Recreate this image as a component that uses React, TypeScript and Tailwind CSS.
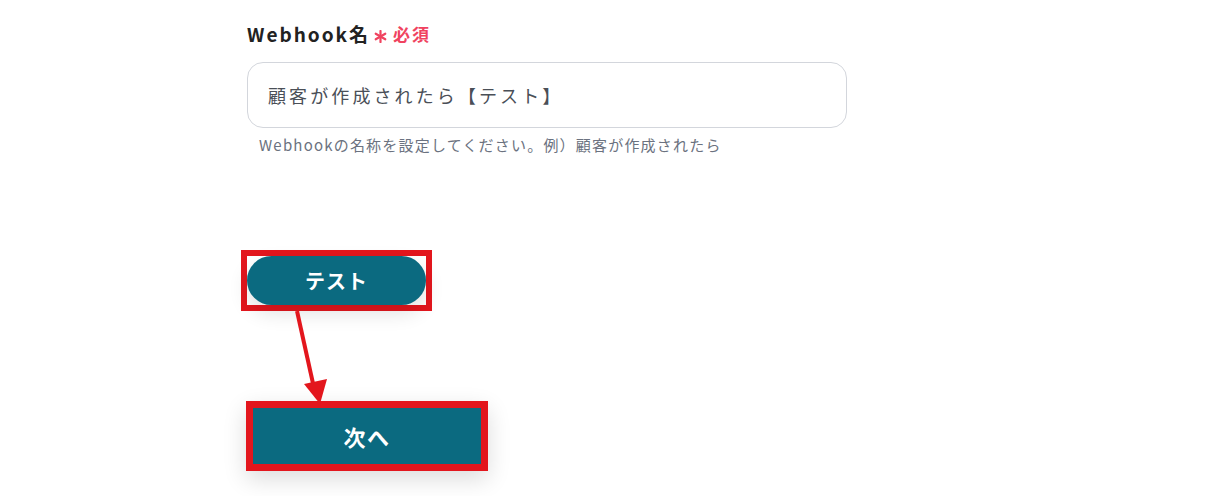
import React from 'react';

function Arrow() {
  return (
    <svg
      className="absolute left-0 top-0 pointer-events-none"
      width={1231}
      height={496}
      viewBox="0 0 1231 496"
    >
      <line x1={297} y1={311} x2={314} y2={388} stroke="#e3161d" strokeWidth={4} />
      <polygon points="304,384 327,379 320,404" fill="#e3161d" />
    </svg>
  );
}

function Asterisk() {
  return (
    <svg width={13} height={13} viewBox="0 0 13 13" className="mt-[5px]">
      <g stroke="#f0435f" strokeWidth={2.2} strokeLinecap="round">
        <line x1={6.5} y1={1} x2={6.5} y2={12} />
        <line x1={1.7} y1={3.7} x2={11.3} y2={9.3} />
        <line x1={1.7} y1={9.3} x2={11.3} y2={3.7} />
      </g>
    </svg>
  );
}

export default function App() {
  return (
    <div className="relative w-[1231px] h-[496px] bg-white overflow-hidden font-['Noto_Sans_CJK_JP','Noto_Sans',sans-serif]">
      <div className="pl-[247px] pt-[20px]">
        {/* label */}
        <div className="flex items-center h-[28px]">
          <span className="text-[19px] font-bold text-[#222] tracking-[2px]">Webhook名</span>
          <span className="ml-[4px]">
            <Asterisk />
          </span>
          <span className="ml-[6px] text-[17px] font-bold text-[#f0435f] tracking-[2px]">必須</span>
        </div>

        {/* input */}
        <div className="mt-[14px] w-[600px] h-[66px] rounded-[16px] border border-[#d3d6dc] flex items-center pl-[20px]">
          <span className="text-[18px] text-[#4a4f57] tracking-[3.1px]">顧客が作成されたら【テスト】</span>
        </div>
        <p className="mt-[6px] pl-[12px] text-[15px] text-[#6b7280] leading-[22px] tracking-[1.2px]">
          Webhookの名称を設定してください。例）顧客が作成されたら
        </p>

        {/* test button */}
        <div className="mt-[94px] ml-[-6px] w-[191px] h-[61px] border-[6px] border-[#e3161d]">
          <button className="w-full h-full rounded-full bg-[#0b6a80] text-white text-[20px] font-bold tracking-[1px] shadow-[0_8px_20px_rgba(0,0,0,0.12)] flex items-center justify-center">
            テスト
          </button>
        </div>

        {/* next button */}
        <div className="mt-[90px] ml-[-1px] w-[242px] h-[70px] border-[7px] border-[#e3161d] shadow-[0_8px_22px_rgba(0,0,0,0.14)]">
          <button className="w-full h-full bg-[#0b6a80] text-white text-[22px] font-bold tracking-[1.5px] flex items-center justify-center">
            次へ
          </button>
        </div>
      </div>
      <Arrow />
    </div>
  );
}
